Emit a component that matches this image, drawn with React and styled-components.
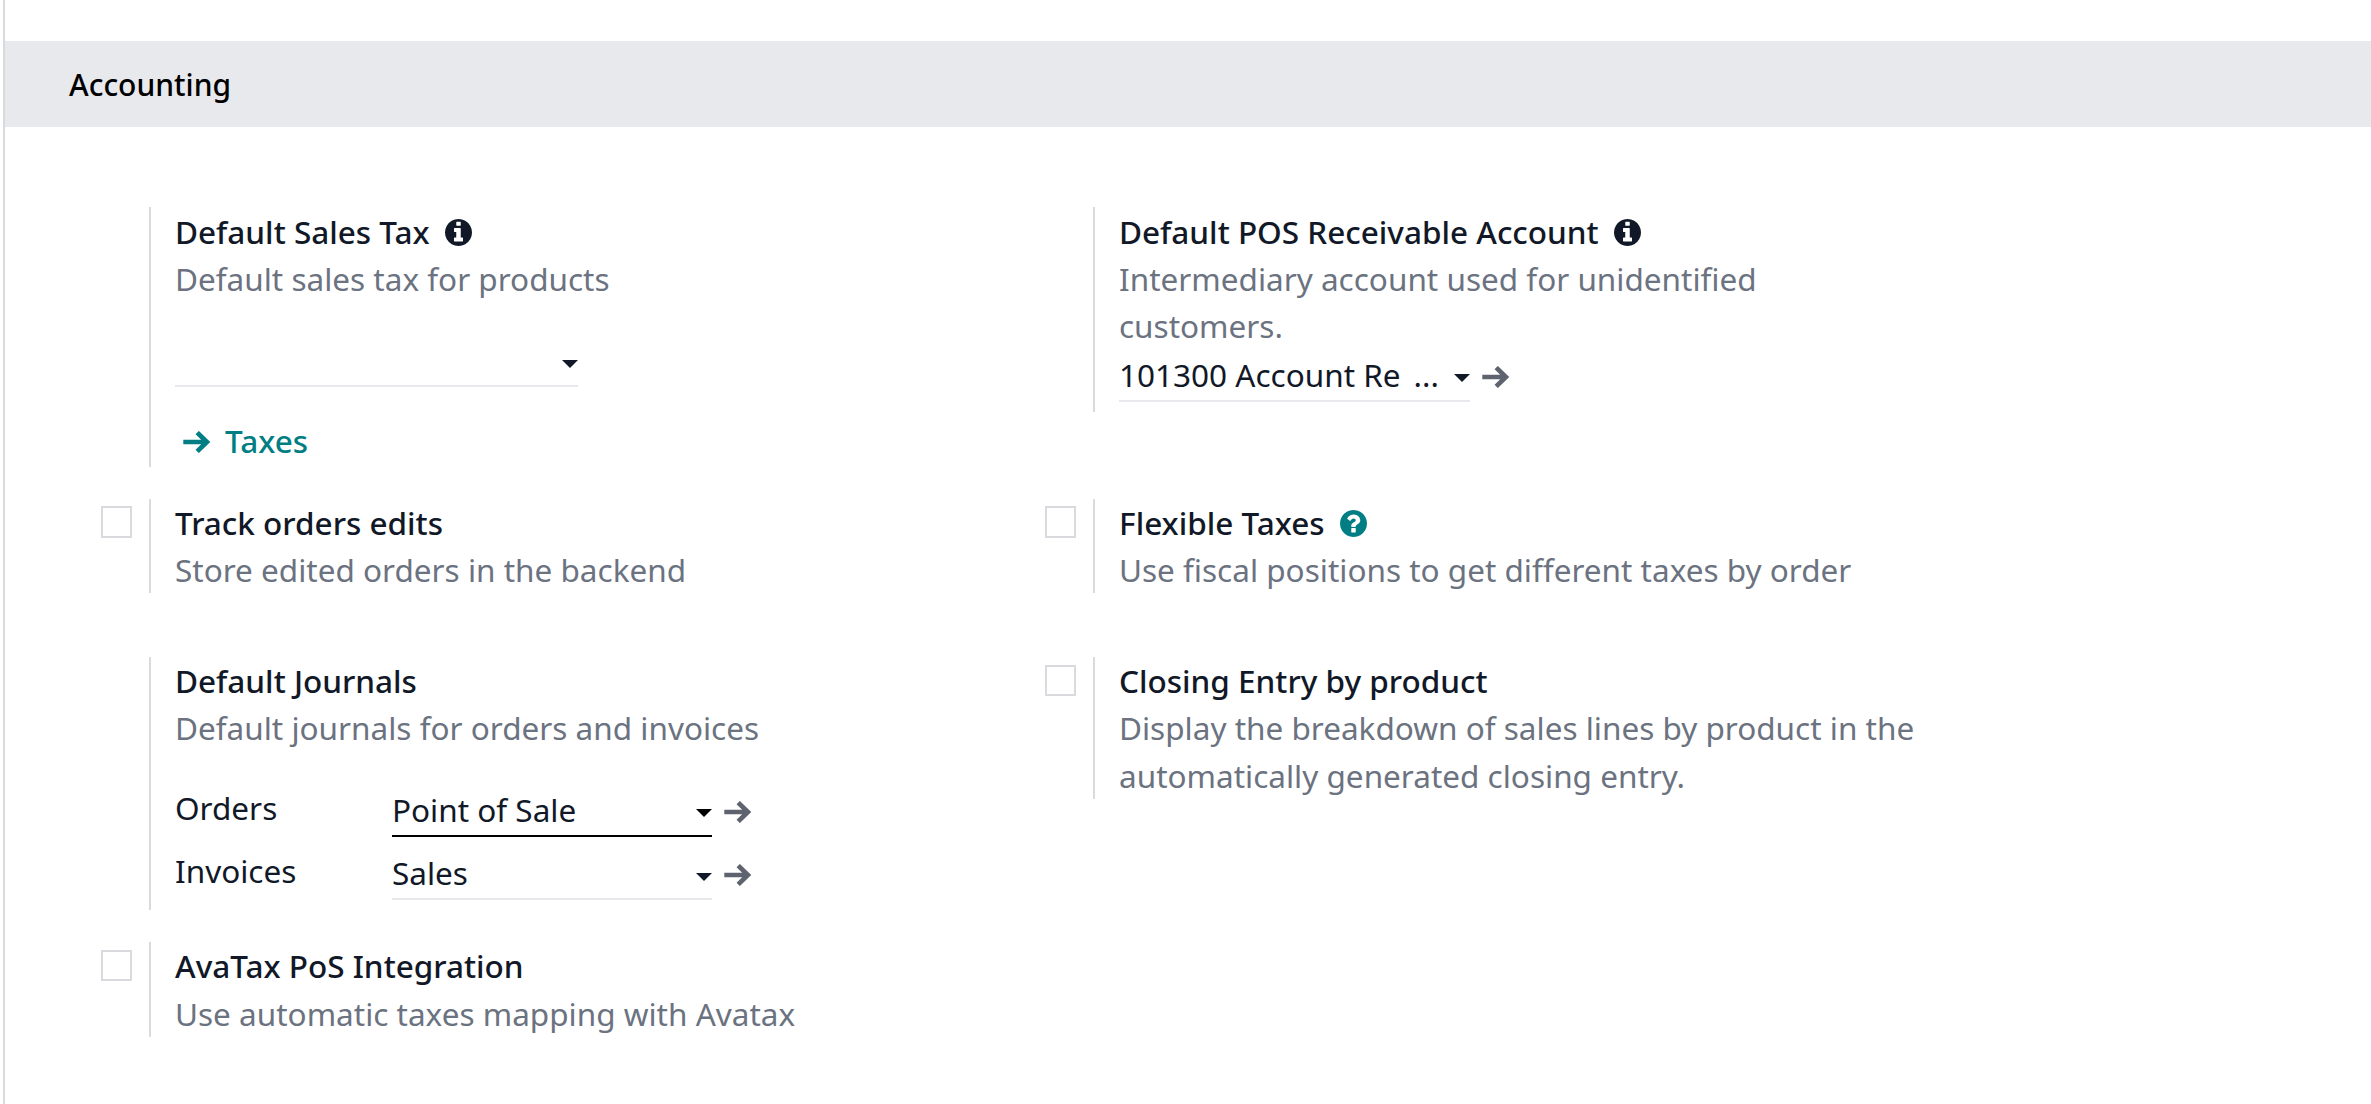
import React from "react";
import styled, { createGlobalStyle } from "styled-components";

const GlobalStyle = createGlobalStyle`
  * { box-sizing: border-box; }
  body {
    margin: 0;
    background: #fff;
    color: #111827;
    font-family: "Noto Sans", sans-serif;
    font-size: 31.5px;
    line-height: 47.25px;
  }
`;

const Page = styled.main`
  min-height: 1104px;
  margin-left: 3px;
  padding-top: 41px;
  border-left: 2px solid #d8dadd;
  overflow: hidden;
`;

const SectionHeader = styled.h2`
  display: flex;
  align-items: center;
  height: 86px;
  margin: 0 0 80px;
  padding: 2px 0 0 64px;
  background: #e7e9ed;
  color: #000;
  font-size: 30px;
  font-weight: 500;
`;

const SettingsGrid = styled.div`
  display: grid;
  grid-template-columns: 944px 944px;
  align-items: start;
  padding-left: 96px;
`;

const Setting = styled.section`
  display: grid;
  grid-template-columns: 48px 1fr;
  margin-bottom: ${(p) => p.$gap}px;
`;

const Checkbox = styled.input.attrs({ type: "checkbox" })`
  appearance: none;
  width: 31px;
  height: ${(p) => p.$height || 31}px;
  margin: ${(p) => p.$top || 8}px 0 0;
  border: 2px solid #d8dadd;
  background: #fff;
`;

const Body = styled.div`
  grid-column: 2;
  height: ${(p) => p.$height}px;
  padding-top: ${(p) => p.$inset || 0}px;
  padding-left: 24px;
  border-left: 2px solid #d8dadd;
`;

const Title = styled.div`
  display: flex;
  align-items: center;
  gap: 15.5px;
  color: #111827;
  font-weight: 500;
  white-space: nowrap;
`;

const Description = styled.div`
  width: ${(p) => p.$width || 810}px;
  color: #6b7280;
`;

const FieldRow = styled.div`
  display: flex;
  align-items: flex-start;
  margin-top: ${(p) => p.$top || 0}px;
`;

const FieldLabel = styled.label`
  width: 217px;
  height: 50px;
  margin-top: -2px;
`;

const Select = styled.div`
  display: flex;
  align-items: flex-start;
  justify-content: space-between;
  width: ${(p) => p.$width}px;
  height: ${(p) => p.$height || 51}px;
  border-bottom: 2px solid ${(p) => (p.$active ? "#000" : "#e7e9ed")};
  color: ${(p) => (p.$active ? "#000" : "#111827")};
`;

const Value = styled.span`
  color: #111827;
  white-space: pre;
`;

const Caret = styled.span`
  margin-top: ${(p) => p.$top || 23}px;
  margin-left: auto;
  border: 8px solid transparent;
  border-top-color: currentColor;
  border-bottom: 0;
`;

const Ellipsis = styled.span`
  margin-left: 13px;
`;

const OpenButton = styled.button`
  display: flex;
  margin: 15px 0 0 12px;
  padding: 0;
  border: 0;
  background: none;
  color: #5f636f;
`;

const Glyph = styled.svg`
  display: block;
  flex: none;
  color: ${(p) => p.$color || "currentColor"};
`;

const TitleGlyph = styled(Glyph)`
  margin-top: ${(p) => p.$top}px;
`;

const TaxLink = styled.a`
  display: flex;
  align-items: center;
  gap: 14px;
  margin: 30px 0 0 8px;
  color: #017e84;
  font-weight: 500;

  ${Glyph} {
    margin-top: 2px;
  }
`;

const InfoIcon = () => (
  <TitleGlyph width="27" height="27" viewBox="128 128 1536 1536" fill="currentColor" $top={3}>
    <path d="M1152 1376v-160q0-14-9-23t-23-9h-96v-512q0-14-9-23t-23-9h-320q-14 0-23 9t-9 23v160q0 14 9 23t23 9h96v320h-96q-14 0-23 9t-9 23v160q0 14 9 23t23 9h448q14 0 23-9t9-23zm-128-896v-160q0-14-9-23t-23-9h-192q-14 0-23 9t-9 23v160q0 14 9 23t23 9h192q14 0 23-9t9-23zm640 416q0 209-103 385.5t-279.5 279.5-385.5 103-385.5-103-279.5-279.5-103-385.5 103-385.5 279.5-279.5 385.5-103 385.5 103 279.5 279.5 103 385.5z" />
  </TitleGlyph>
);

const HelpIcon = () => (
  <TitleGlyph width="27" height="27" viewBox="128 128 1536 1536" fill="currentColor" $color="#017e84" $top={2}>
    <path d="M1024 1376v-192q0-14-9-23t-23-9h-192q-14 0-23 9t-9 23v192q0 14 9 23t23 9h192q14 0 23-9t9-23zm256-672q0-88-55.5-163t-138.5-116-170-41q-243 0-371 213-15 24 8 42l132 100q7 6 19 6 16 0 25-12 53-68 86-92 34-24 86-24 48 0 85.5 26t37.5 59q0 38-20 61t-68 45q-63 28-115.5 86.5t-52.5 125.5v36q0 14 9 23t23 9h192q14 0 23-9t9-23q0-19 21.5-49.5t54.5-49.5q32-18 49-28.5t46-35 44.5-48 28-60.5 12.5-81zm384 192q0 209-103 385.5t-279.5 279.5-385.5 103-385.5-103-279.5-279.5-103-385.5 103-385.5 279.5-279.5 385.5-103 385.5 103 279.5 279.5 103 385.5z" />
  </TitleGlyph>
);

const ArrowIcon = () => (
  <Glyph width="28" height="22" viewBox="0 0 28 22" fill="none" stroke="currentColor" strokeWidth="4.7">
    <path d="M0.3 11H24M14.2 1.6L23.9 11L14.2 20.4" />
  </Glyph>
);

export default function App() {
  return (
    <>
      <GlobalStyle />
      <Page>
        <SectionHeader>Accounting</SectionHeader>
        <SettingsGrid>
          <Setting $gap={32}>
            <Body $height={260} $inset={0.5}>
              <Title>Default Sales Tax <InfoIcon /></Title>
              <Description>Default sales tax for products</Description>
              <FieldRow $top={31.5}>
                <Select $width={403} $height={53.5}><Caret $top={26} /></Select>
              </FieldRow>
              <TaxLink><ArrowIcon />Taxes</TaxLink>
            </Body>
          </Setting>
          <Setting $gap={32}>
            <Body $height={205} $inset={0.5}>
              <Title>Default POS Receivable Account <InfoIcon /></Title>
              <Description $width={700}>Intermediary account used for unidentified customers.</Description>
              <FieldRow $top={1.5}>
                <Select $width={351}>
                  <Value>101300 Account Re</Value>
                  <Ellipsis>...</Ellipsis>
                  <Caret />
                </Select>
                <OpenButton aria-label="Open account"><ArrowIcon /></OpenButton>
              </FieldRow>
            </Body>
          </Setting>

          <Setting $gap={64}>
            <Checkbox $top={7} $height={32} />
            <Body $height={94}>
              <Title>Track orders edits</Title>
              <Description>Store edited orders in the backend</Description>
            </Body>
          </Setting>
          <Setting $gap={64}>
            <Checkbox $top={7} $height={32} />
            <Body $height={94}>
              <Title>Flexible Taxes <HelpIcon /></Title>
              <Description>Use fiscal positions to get different taxes by order</Description>
            </Body>
          </Setting>

          <Setting $gap={32}>
            <Body $height={253}>
              <Title>Default Journals</Title>
              <Description>Default journals for orders and invoices</Description>
              <FieldRow $top={34.5}>
                <FieldLabel>Orders</FieldLabel>
                <Select $width={320} $active><Value>Point of Sale</Value><Caret /></Select>
                <OpenButton aria-label="Open orders journal"><ArrowIcon /></OpenButton>
              </FieldRow>
              <FieldRow $top={12}>
                <FieldLabel>Invoices</FieldLabel>
                <Select $width={320}><Value>Sales</Value><Caret $top={24} /></Select>
                <OpenButton aria-label="Open invoices journal"><ArrowIcon /></OpenButton>
              </FieldRow>
            </Body>
          </Setting>
          <Setting $gap={32}>
            <Checkbox />
            <Body $height={142}>
              <Title>Closing Entry by product</Title>
              <Description>Display the breakdown of sales lines by product in the automatically generated closing entry.</Description>
            </Body>
          </Setting>

          <Setting $gap={0}>
            <Checkbox />
            <Body $height={95} $inset={0.25}>
              <Title>AvaTax PoS Integration</Title>
              <Description>Use automatic taxes mapping with Avatax</Description>
            </Body>
          </Setting>
        </SettingsGrid>
      </Page>
    </>
  );
}
